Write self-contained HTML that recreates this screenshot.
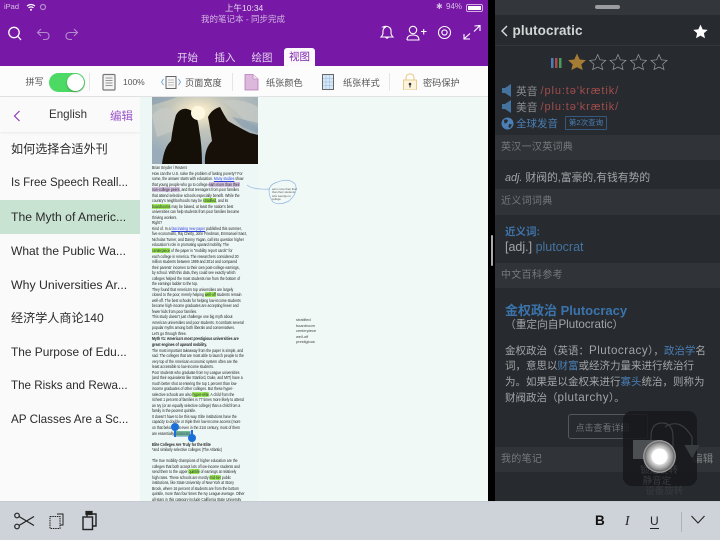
<!DOCTYPE html>
<html><head><meta charset="utf-8">
<style>
*{margin:0;padding:0;box-sizing:border-box}
html,body{width:720px;height:540px;overflow:hidden;background:#000;font-family:"Liberation Sans","Noto Sans CJK SC",sans-serif}
.a{position:absolute;white-space:nowrap}
#root{position:relative;width:720px;height:540px;overflow:hidden;filter:blur(.3px)}
.row{position:absolute;left:11px;font-size:12px;color:#2b2b2b;line-height:16px;white-space:nowrap}
#note{position:absolute;left:152px;top:165px;font-size:4.4px;line-height:5.53px;color:#1c1c1c;white-space:nowrap;transform:scaleX(.79);transform-origin:0 0}
#note i{font-style:normal;background:#9be85a}
#note u{color:#3344dd}
#note s{text-decoration:none;background:#d5c3e3}
.sec{position:absolute;left:495px;width:225px;background:#303438;color:#77797b;font-size:10px;padding-left:6px;letter-spacing:.3px}
.bl{color:#4a7eb5}
.lat{font-size:11.6px}
</style></head><body><div id="root">
<!-- header -->
<div class="a" style="left:0;top:0;width:488px;height:66px;background:#7719a6"></div>
<div class="a" style="left:4px;top:2px;font-size:7.5px;color:#d9c0e6">iPad</div>
<svg class="a" style="left:26px;top:3px" width="24" height="9" viewBox="0 0 24 9"><path d="M1 3Q5 0 9 3M2.500 4.800Q5 3 7.500 4.800" stroke="#fff" stroke-width="1.200" fill="none"/><circle cx="5" cy="6.800" r="1" fill="#fff"/><circle cx="17" cy="4" r="2.500" fill="none" stroke="#b48ccd" stroke-width="1.200"/></svg>
<div class="a" style="left:225px;top:1.500px;font-size:8.5px;color:#eadcf1">上午10:34</div>
<div class="a" style="left:201px;top:13px;font-size:8.500px;color:#d3b6e3">我的笔记本 - 同步完成</div>
<div class="a" style="left:436px;top:2px;font-size:8px;color:#d9c0e6">✱</div>
<div class="a" style="left:446px;top:2px;font-size:8px;color:#d9c0e6">94%</div>
<div class="a" style="left:466px;top:3.500px;width:17px;height:8px;border:1px solid #d0b0e0;border-radius:2px;padding:1px"><div style="width:13px;height:4px;background:#fff"></div></div>
<!-- header icons -->
<svg class="a" style="left:0;top:20px" width="90" height="24" viewBox="0 0 90 24" fill="none"><circle cx="14" cy="12.500" r="5.200" stroke="#fff" stroke-width="1.300"/><path d="M18 16.500L21 20" stroke="#fff" stroke-width="1.300"/><path d="M41 9L37.500 12.500L41 16M38 12.500H45.500Q49 12.500 49 16T45.500 19.500H43" stroke="#b58bcf" stroke-width="1.100"/><path d="M74 9L77.500 12.500L74 16M77 12.500H70Q66 12.500 66 16T70 19.500H72" stroke="#b58bcf" stroke-width="1.100"/></svg>
<svg class="a" style="left:375px;top:24px" width="108" height="18" viewBox="0 0 108 18" fill="none" stroke="#fff" stroke-width="1.100"><path d="M7 5Q11 3.500 13.500 5.500Q15.500 7 15 11Q15 13 17 15H5Q7 13 7 11Q6.500 7 9 5.500ZM9.500 15Q11 17.500 12.500 15" transform="translate(1 -2)"/><circle cx="38" cy="6" r="3.700"/><path d="M32 16Q32 11 38 11T44 16H32M46 7.500H51.500M48.700 5V10.500"/><circle cx="69.500" cy="8.500" r="2.600"/><circle cx="69.500" cy="8.500" r="6"/><path d="M100.500 2L106 1.500V7M105.500 2L100 7.500M90 10V15H96M90.500 14.500L96 9.500" transform="translate(-1 0)"/></svg>
<!-- tabs -->
<div class="a" style="left:177px;top:50px;font-size:10.500px;color:#e4d0ee">开始</div>
<div class="a" style="left:214.500px;top:50px;font-size:10.500px;color:#e4d0ee">插入</div>
<div class="a" style="left:251.500px;top:50px;font-size:10.500px;color:#e4d0ee">绘图</div>
<div class="a" style="left:284px;top:48px;width:31px;height:19px;background:#fbf9fc;border-radius:3px 3px 0 0;color:#7c22ac;font-size:10.500px;text-align:center;line-height:19px">视图</div>
<!-- toolbar -->
<div class="a" style="left:0;top:66px;width:488px;height:31px;background:#fcfcfc;border-bottom:1px solid #e3e3e3"></div>
<div class="a" style="left:25.500px;top:75px;font-size:9px;color:#555">拼写</div>
<div class="a" style="left:49px;top:73px;width:36px;height:19px;border-radius:10px;background:#4cd964"><div style="position:absolute;right:1px;top:1px;width:17px;height:17px;border-radius:50%;background:#fff;box-shadow:0 1px 2px rgba(0,0,0,.3)"></div></div>
<div class="a" style="left:89px;top:73px;width:1px;height:18px;background:#e5e5e5"></div>
<svg class="a" style="left:100px;top:72px" width="18" height="20" viewBox="0 0 18 20" fill="none" stroke="#777"><rect x="3" y="2.500" width="12" height="15.500" rx="1" fill="#f4f4f4" stroke-width="1.200"/><path d="M5.500 6H12.500M5.500 8.500H12.500M5.500 11H12.500M5.500 13.500H12.500" stroke-width=".7"/></svg>
<div class="a" style="left:123px;top:77px;font-size:8.500px;color:#555">100%</div>
<svg class="a" style="left:160px;top:73px" width="22" height="18" viewBox="0 0 22 18" fill="none"><path d="M3.500 6L1.500 9L3.500 12M18.500 6L20.500 9L18.500 12" stroke="#5b9bd5" stroke-width=".8"/><rect x="6" y="3.500" width="10" height="12" stroke="#666" fill="#f6f6f6"/><path d="M8 7H14M8 9.500H14M8 12H14" stroke="#888" stroke-width=".6"/></svg>
<div class="a" style="left:185px;top:75px;font-size:9.200px;color:#555">页面宽度</div>
<div class="a" style="left:232px;top:73px;width:1px;height:18px;background:#e5e5e5"></div>
<svg class="a" style="left:243px;top:72px" width="16" height="20" viewBox="0 0 16 20"><path d="M2 2.500H10L15 7V18H2Z" fill="#dcb8dc" stroke="#b878b8" stroke-width=".8"/><path d="M10 2.500V7H15" fill="#f0e0f0" stroke="#b878b8" stroke-width=".6"/></svg>
<div class="a" style="left:266px;top:75px;font-size:9.200px;color:#555">纸张颜色</div>
<svg class="a" style="left:321px;top:73px" width="14" height="18" viewBox="0 0 14 18"><rect x="1.500" y="1.500" width="11" height="15" fill="#d9e8f6" stroke="#666"/><path d="M5 2V16M8.500 2V16M2 5.500H12M2 9H12M2 12.500H12" stroke="#8fb8e0" stroke-width=".5"/></svg>
<div class="a" style="left:343px;top:75px;font-size:9.200px;color:#555">纸张样式</div>
<div class="a" style="left:389px;top:73px;width:1px;height:18px;background:#e5e5e5"></div>
<svg class="a" style="left:402px;top:72px" width="16" height="18" viewBox="0 0 16 18"><path d="M4 9V6Q4 2 8 2T12 6V9" fill="none" stroke="#e8cc8c" stroke-width="1.100"/><rect x="1.500" y="8" width="13" height="10" fill="#fbf3dc" stroke="#e8cc8c"/><circle cx="8" cy="12" r="1.300" fill="#333"/><path d="M8 12V15.500" stroke="#333"/></svg>
<div class="a" style="left:423px;top:75px;font-size:9.200px;color:#555">密码保护</div>
<!-- left list -->
<div class="a" style="left:0;top:97px;width:140px;height:404px;background:#fbfafb"></div>
<div class="a" style="left:0;top:97px;width:140px;height:35px;background:#fbfafb;box-shadow:0 1px 3px rgba(0,0,0,.07)"></div>
<svg class="a" style="left:12px;top:108px" width="10" height="16" viewBox="0 0 10 16"><path d="M7.500 3L2.500 8L7.500 13" stroke="#8a3cc0" stroke-width="1.200" fill="none"/></svg>
<div class="a" style="left:49px;top:108px;font-size:11.600px;color:#333">English</div>
<div class="a" style="left:110px;top:108px;font-size:11.500px;color:#9a55c9">编辑</div>
<div class="a" style="left:0;top:200px;width:140px;height:34px;background:#c9e3d3"></div>
<div class="row" style="top:141px;font-size:12.100px">如何选择合适外刊</div>
<div class="row" style="top:175px;font-size:11.500px">Is Free Speech Reall...</div>
<div class="row" style="top:209px;font-size:12.200px">The Myth of Americ...</div>
<div class="row" style="top:243px;font-size:12px">What the Public Wa...</div>
<div class="row" style="top:277px;font-size:12.300px">Why Universities Ar...</div>
<div class="row" style="top:310px;font-size:12.100px">经济学人商论140</div>
<div class="row" style="top:344px;font-size:11.900px">The Purpose of Edu...</div>
<div class="row" style="top:378px;font-size:11.600px">The Risks and Rewa...</div>
<div class="row" style="top:412px;font-size:11.700px">AP Classes Are a Sc...</div>
<!-- page -->
<div class="a" style="left:140px;top:97px;width:118px;height:404px;background:#edf7f5"></div>
<div class="a" style="left:258px;top:97px;width:230px;height:404px;background:#f1f9f7"></div>
<svg class="a" style="left:152px;top:97px" width="106" height="67" viewBox="0 0 106 67">
<defs><radialGradient id="g" cx="44%" cy="22%" r="70%"><stop offset="0" stop-color="#fffdf0"/><stop offset=".12" stop-color="#f1e6c8"/><stop offset=".4" stop-color="#c3c5ba"/><stop offset="1" stop-color="#9aacba"/></radialGradient></defs>
<rect width="106" height="67" fill="url(#g)"/>
<path d="M0 18Q12 6 22 14T32 30L5 40ZM70 4Q88 0 106 10V30Q90 24 84 14Z" fill="#c9ccc8" opacity=".7"/>
<path d="M0 0H25Q12 5 0 8ZM80 20L106 26V36L90 30Z" fill="#7f97ad" opacity=".55"/>
<path d="M10 67Q12 50 19 44Q21 28 24 18Q30 8 40 14Q46 20 47 32Q50 48 50 67Z" fill="#141008"/>
<path d="M53 67Q52 52 60 44Q58 30 56 20Q60 12 68 10Q72 18 76 24Q86 30 98 36L106 38V67Z" fill="#161008"/>
<circle cx="46" cy="16" r="7" fill="#fff8e0"/>
</svg>
<div id="note">Brian Snyder / Reuters<br>How can the U.S. solve the problem of lasting poverty? For<br>some, the answer starts with education. <u>Many studies</u> show<br>that young people who go to college <s>earn more than their</s><br><s>non-college peers</s>, and that teenagers from poor families<br>that attend selective schools especially benefit. While the<br>country's neighborhoods may be <i>stratified</i>, and its<br><i>boardrooms</i> may be biased, at least the nation's best<br>universities can help students from poor families become<br>thriving workers.<br>Right?<br>Kind of. In a <u>fascinating new paper</u> published this summer,<br>five economists, Raj Chetty, John Friedman, Emmanuel Saez,<br>Nicholas Turner, and Danny Yagan, call into question higher<br>education's role in promoting upward mobility. The<br><i>centerpiece</i> of the paper is "mobility report cards" for<br>each college in America. The researchers considered 30<br>million students between 1999 and 2014 and compared<br>their parents' incomes to their own post-college earnings,<br>by school. With this data, they could see exactly which<br>colleges helped the most students rise from the bottom of<br>the earnings ladder to the top.<br>They found that America's top universities are largely<br>closed to the poor, merely helping <i>well-off</i> students remain<br>well-off. The best schools for helping low-income students<br>become high-income graduates are accepting fewer and<br>fewer kids from poor families.<br>This study doesn't just challenge one big myth about<br>American universities and poor students. It combats several<br>popular myths among both liberals and conservatives.<br>Let's go through three.<br><b>Myth #1: America's most prestigious universities are</b><br><b>great engines of upward mobility.</b><br>The most important takeaway from the paper is simple, and<br>sad. The colleges that are most able to launch people to the<br>very top of the American economic system often are the<br>least accessible to low-income students.<br>Poor students who graduate from Ivy League universities<br>(and their equivalents like Stanford, Duke, and MIT) have a<br>much better shot at entering the top 1 percent than low-<br>income graduates of other colleges. But these hyper-<br>selective schools are also <i>hyper-elite</i>. A child from the<br>richest 1 percent of families is 77 times more likely to attend<br>an Ivy (or an equally selective college) than a child from a<br>family in the poorest quintile.<br>It doesn't have to be this way. Elite institutions have the<br>capacity to double or triple their low-income access (more<br>on that below), but even in the 21st century, most of them<br>are essentially <i>plutocrats</i>.<br>&nbsp;<br><b>Elite Colleges Are Truly for the Elite</b><br>*and similarly selective colleges (The Atlantic)<br>&nbsp;<br>The true mobility champions of higher education are the<br>colleges that both accept lots of low-income students and<br>send them to the upper <i>quintile</i> of earnings at relatively<br>high rates. These schools are mostly <i>mid-tier</i> public<br>institutions, like State University of New York at Stony<br>Brook, where 16 percent of students are from the bottom<br>quintile, more than four times the Ivy League average. Other<br>all-stars in this category include California State University</div>
<!-- selection -->
<div class="a" style="left:175px;top:431px;width:17px;height:6px;background:rgba(70,130,220,.45)"></div>
<div class="a" style="left:174px;top:428px;width:2px;height:9px;background:#1a6fd8"></div>
<div class="a" style="left:191px;top:430px;width:2px;height:8px;background:#1a6fd8"></div>
<div class="a" style="left:171px;top:423px;width:8px;height:8px;border-radius:50%;background:#1a6fd8"></div>
<div class="a" style="left:187.500px;top:433.500px;width:8px;height:8px;border-radius:50%;background:#1a6fd8"></div>
<!-- annotation -->
<svg class="a" style="left:245px;top:178px" width="55" height="30" viewBox="0 0 55 30" fill="none" stroke="#8fb4e2" stroke-width=".7"><path d="M2 7Q8 12 25 11"/><path d="M30 5Q44 -1 50 6Q54 14 44 23Q34 28 28 24Q24 19 24 12Q25 7 30 5Z"/></svg>
<div class="a" style="left:272px;top:188px;font-size:2.800px;line-height:3.400px;color:#555">earn more than their<br>than their students<br>who went/go to<br>college</div>
<div class="a" style="left:296px;top:317px;font-size:3.900px;line-height:5.600px;color:#444">stratified<br>boardroom<br>centerpiece<br>well-off<br>prestigious</div>
<!-- divider -->
<div class="a" style="left:488px;top:0;width:7px;height:540px;background:#000"></div>
<div class="a" style="left:491px;top:235px;width:2px;height:31px;background:#aaa;border-radius:1px"></div>
<!-- dark pane -->
<div class="a" style="left:495px;top:0;width:225px;height:501px;background:#272b2f"></div>
<div class="a" style="left:495px;top:0;width:225px;height:15px;background:#33373b"></div>
<div class="a" style="left:595px;top:5px;width:25px;height:3.500px;background:#9a9c9e;border-radius:2px"></div>
<div class="a" style="left:495px;top:15px;width:225px;height:31px;background:#272b2f;border-bottom:1px solid #33373a"></div>
<svg class="a" style="left:499px;top:23px" width="12" height="16" viewBox="0 0 12 16"><path d="M8 3L3 8L8 13" stroke="#ddd" stroke-width="1.400" fill="none"/></svg>
<div class="a" style="left:512.500px;top:23px;font-size:13.500px;font-weight:bold;color:#d4d5d6;letter-spacing:.1px">plutocratic</div>
<svg class="a" style="left:693px;top:24px" width="15" height="15" viewBox="0 0 24 24"><path d="M12 1L15.400 8.500L23.500 9.300L17.400 14.700L19.200 22.700L12 18.500L4.800 22.700L6.600 14.700L.5 9.300L8.600 8.500Z" fill="#fff"/></svg>
<!-- rating -->
<svg class="a" style="left:550px;top:53px" width="120" height="18" viewBox="0 0 120 18"><rect x="1" y="5" width="2.500" height="10" fill="#4a7eb5"/><rect x="5" y="5" width="2.500" height="10" fill="#b04a4a"/><rect x="9" y="5" width="2.500" height="10" fill="#4a9a5a"/>
<path d="M27 1.500L29.700 7.500L36 8.100L31.300 12.400L32.700 18L27 15.300L21.300 18L22.700 12.400L18 8.100L24.300 7.500Z" fill="#a47c34" transform="translate(0 -1)"/>
<path d="M47.700 2.500L50 7.800L55.700 8.400L51.400 12.300L52.700 17.500L47.700 15L42.700 17.500L44 12.300L39.700 8.400L45.400 7.800Z" fill="none" stroke="#9a9c9e" stroke-width=".7" transform="translate(0 -1)"/>
<path d="M68 2.500L70.300 7.800L76 8.400L71.700 12.300L73 17.500L68 15L63 17.500L64.300 12.300L60 8.400L65.700 7.800Z" fill="none" stroke="#9a9c9e" stroke-width=".7" transform="translate(0 -1)"/>
<path d="M88.500 2.500L90.800 7.800L96.500 8.400L92.200 12.300L93.500 17.500L88.500 15L83.500 17.500L84.800 12.300L80.500 8.400L86.200 7.800Z" fill="none" stroke="#9a9c9e" stroke-width=".7" transform="translate(0 -1)"/>
<path d="M109 2.500L111.300 7.800L117 8.400L112.700 12.300L114 17.500L109 15L104 17.500L105.300 12.300L101 8.400L106.700 7.800Z" fill="none" stroke="#9a9c9e" stroke-width=".7" transform="translate(0 -1)"/></svg>
<!-- pron -->
<svg class="a" style="left:501px;top:83px" width="12" height="32" viewBox="0 0 12 32" fill="#44739f"><path d="M1 5H4L10 1V14L4 10H1ZM1 21H4L10 17V30L4 26H1Z"/></svg>
<div class="a" style="left:516px;top:83px;font-size:10.800px;color:#8a8c8e;letter-spacing:-.1px">英音</div>
<div class="a" style="left:540.500px;top:85px;font-size:11px;color:#a34c4c;letter-spacing:.9px">/plu:tə'krætik/</div>
<div class="a" style="left:516px;top:99px;font-size:10.800px;color:#8a8c8e;letter-spacing:-.1px">美音</div>
<div class="a" style="left:540.500px;top:101px;font-size:11px;color:#a34c4c;letter-spacing:.9px">/plu:tə'krætik/</div>
<svg class="a" style="left:501px;top:117px" width="13" height="13" viewBox="0 0 13 13"><circle cx="6.500" cy="6.500" r="6" fill="#4a7eb5"/><path d="M3 3Q6 1.500 7 3.500L5.500 6L3.500 6.500ZM8 7L11 7.500L9 11L7.500 10Z" fill="#272b2f"/></svg>
<div class="a" style="left:516px;top:116px;font-size:10.500px;color:#4a7eb5;letter-spacing:0">全球发音</div>
<div class="a" style="left:565px;top:116px;width:42px;height:13.500px;border:1px solid #36587c;border-radius:1px;font-size:7.500px;color:#4a7eb5;text-align:center;line-height:12px">第2次查询</div>
<div class="sec" style="top:135px;height:25px;line-height:25px">英汉一汉英词典</div>
<div class="a" style="left:505px;top:168.500px;font-size:10.800px;color:#a3a5a7"><span style="font-style:italic">adj.</span> 财阀的,富豪的,有钱有势的</div>
<div class="sec" style="top:189px;height:26px;line-height:26px">近义词词典</div>
<div class="a" style="left:505px;top:224px;font-size:10.500px;font-weight:bold;color:#3f75ad">近义词:</div>
<div class="a" style="left:505px;top:240px;font-size:12.500px;color:#a3a5a7">[adj.] <span style="color:#44739f">plutocrat</span></div>
<div class="sec" style="top:263px;height:25px;line-height:25px">中文百科参考</div>
<div class="a" style="left:505px;top:300px;font-size:13px;font-weight:bold;color:#3b74ad">金权政治 Plutocracy</div>
<div class="a" style="left:505px;top:317px;font-size:10.700px;color:#a3a5a7">（重定向自<span class="lat">Plutocratic</span>）</div>
<div class="a" style="left:505px;top:343px;font-size:10.500px;line-height:15.400px;color:#a3a5a7">金权政治（英语：<span class="lat" style="letter-spacing:.5px">Plutocracy</span>），<span class="bl">政治学</span>名<br>词，意思以<span class="bl">财富</span>或经济力量来进行统治行<br>为。如果是以金权来进行<span class="bl">寡头</span>统治，则称为<br>财阀政治（<span class="lat" style="letter-spacing:.5px">plutarchy</span>）。</div>
<div class="a" style="left:568px;top:414px;width:80px;height:24.500px;border:1px solid #55585b;border-radius:3px;font-size:9px;color:#707274;padding:6px 0 0 6.500px">点击查看详细</div>
<div class="sec" style="top:447px;height:25px;line-height:25px">我的笔记<span style="position:absolute;left:197px;color:#7f8183;font-size:10.500px">编辑</span></div>
<!-- assistive -->
<div class="a" style="left:623px;top:411px;width:74px;height:75px;background:rgba(22,24,27,.85);border-radius:9px"></div>
<svg class="a" style="left:620px;top:415px" width="85" height="85" viewBox="0 0 85 85" fill="none" stroke="#3a3d40" stroke-width="1.200"><path d="M31 34V22Q31 8 42 8T53 22V34M45 12Q60 2 72 22L72 35"/><path d="M65 30L72 42L79 30" fill="#3a3d40"/><rect x="13" y="25" width="30" height="19" fill="#4c4f52" stroke="none"/></svg>
<div class="a" style="left:640px;top:466px;font-size:9.500px;line-height:10.500px;color:#383b3e;white-space:pre">锁定旋转
 静音定
  设备旋转</div>
<div class="a" style="left:643px;top:440px;width:33px;height:33px;border-radius:50%;background:radial-gradient(circle,#fff 0 33%,#ddd 35%,#888 58%,#666 62%,#aaa 68%,rgba(90,90,90,.6) 72%,rgba(60,60,60,0) 100%)"></div>
<!-- bottom bar -->
<div class="a" style="left:0;top:501px;width:720px;height:39px;background:#ced2d9;border-top:1px solid #c6cad1"></div>
<svg class="a" style="left:10px;top:508px" width="90" height="26" viewBox="0 0 90 26" fill="none" stroke="#222" stroke-width="1.200"><circle cx="7" cy="7.500" r="2.300"/><circle cx="7" cy="18.500" r="2.300"/><path d="M9 8.500L24 17.500M9 17.500L24 8.500"/><rect x="40" y="8.500" width="10" height="12" stroke-dasharray="1.500 .8" stroke-width="1"/><path d="M47 6H53V17H50" stroke-width="1"/><rect x="73" y="9" width="9.500" height="12.500" stroke-width="1.400"/><path d="M77 9V6H86V18H82.500" stroke-width="1.400"/><rect x="76" y="3.500" width="6" height="3" fill="#222"/></svg>
<div class="a" style="left:595px;top:513px;font-size:13.500px;font-weight:bold;color:#111">B</div>
<div class="a" style="left:625px;top:513px;font-size:13.500px;font-style:italic;font-family:'Liberation Serif',serif;color:#222">I</div>
<div class="a" style="left:650px;top:514.500px;font-size:12px;color:#222;border-bottom:1.500px solid #222;line-height:13px">U</div>
<div class="a" style="left:680.500px;top:512px;width:1px;height:20px;background:#aeb2b8"></div>
<svg class="a" style="left:690px;top:514px" width="16" height="12" viewBox="0 0 16 12"><path d="M1.500 2L8 9L14.500 2" stroke="#222" stroke-width="1.100" fill="none"/></svg>
</div></body></html>
